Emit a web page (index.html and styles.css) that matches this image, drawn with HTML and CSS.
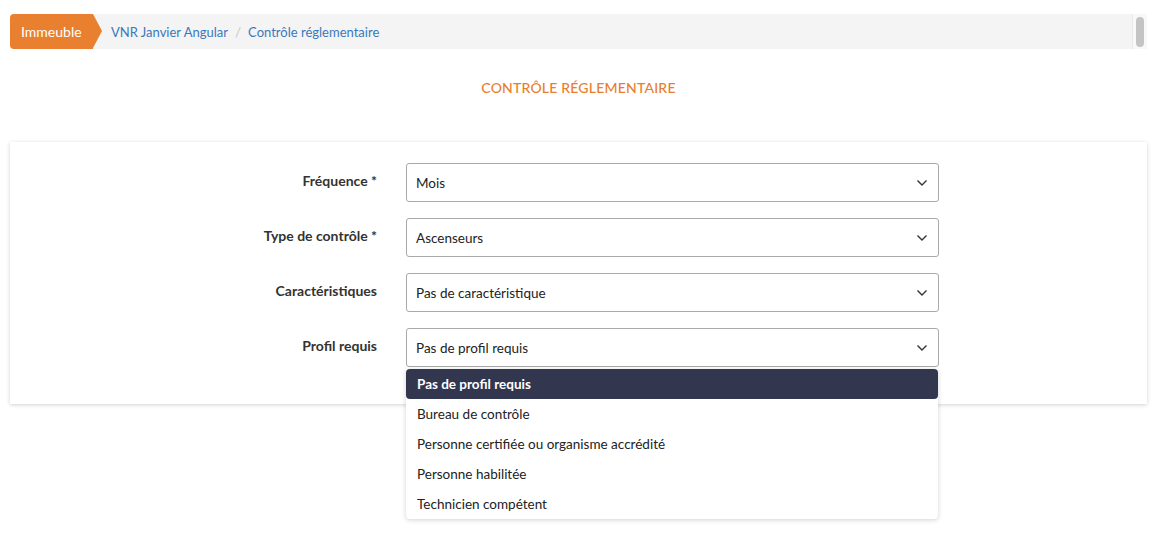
FILE: index.html
```html
<!DOCTYPE html>
<html lang="fr">
<head>
    <meta charset="utf-8">
    <title>Contrôle réglementaire</title>
    <link rel="stylesheet" href="styles.css">
</head>
<body>
    <div class="breadcrumb">
        <span class="crumb-tag">Immeuble</span>
        <a class="crumb-link" href="#">VNR Janvier Angular</a>
        <span class="crumb-sep">/</span>
        <a class="crumb-link" href="#">Contrôle réglementaire</a>
        <div class="crumb-scroll"><div class="crumb-thumb"></div></div>
    </div>

    <h1 class="page-title">CONTRÔLE RÉGLEMENTAIRE</h1>

    <div class="card">
        <div class="form-row">
            <label class="form-label">Fréquence *</label>
            <div class="select">
                <span>Mois</span>
                <svg class="chevron" width="12" height="8" viewBox="0 0 12 8"><path d="M1.5 1.5l4.5 4.5 4.5-4.5" fill="none" stroke="#333" stroke-width="1.4"/></svg>
            </div>
        </div>
        <div class="form-row">
            <label class="form-label">Type de contrôle *</label>
            <div class="select">
                <span>Ascenseurs</span>
                <svg class="chevron" width="12" height="8" viewBox="0 0 12 8"><path d="M1.5 1.5l4.5 4.5 4.5-4.5" fill="none" stroke="#333" stroke-width="1.4"/></svg>
            </div>
        </div>
        <div class="form-row">
            <label class="form-label">Caractéristiques</label>
            <div class="select">
                <span>Pas de caractéristique</span>
                <svg class="chevron" width="12" height="8" viewBox="0 0 12 8"><path d="M1.5 1.5l4.5 4.5 4.5-4.5" fill="none" stroke="#333" stroke-width="1.4"/></svg>
            </div>
        </div>
        <div class="form-row">
            <label class="form-label">Profil requis</label>
            <div class="select-wrap">
                <div class="select">
                    <span>Pas de profil requis</span>
                    <svg class="chevron" width="12" height="8" viewBox="0 0 12 8"><path d="M1.5 1.5l4.5 4.5 4.5-4.5" fill="none" stroke="#333" stroke-width="1.4"/></svg>
                </div>
                <ul class="dropdown">
                    <li class="active">Pas de profil requis</li>
                    <li>Bureau de contrôle</li>
                    <li>Personne certifiée ou organisme accrédité</li>
                    <li>Personne habilitée</li>
                    <li>Technicien compétent</li>
                </ul>
            </div>
        </div>
    </div>
</body>
</html>
```

FILE: styles.css
```css
html {
    height: 100%;
}

body {
    font-family: 'Lato', 'Open Sans', sans-serif;
    margin: 0;
    padding: 14px 9px 0 10px;
    min-height: 100%;
    box-sizing: border-box;
    background-color: #fff;
    color: #333;
    font-size: 13.5px;
}

.breadcrumb {
    display: flex;
    align-items: center;
    height: 35px;
    background-color: #f4f4f4;
    border-radius: 4px;
}

.crumb-tag {
    position: relative;
    display: flex;
    align-items: center;
    height: 35px;
    padding: 0 12px 0 11px;
    width: 60px;
    background-color: #e8802f;
    color: #fff;
    font-size: 14px;
    border-radius: 4px 0 0 4px;
    margin-right: 18px;
}

.crumb-tag::after {
    content: "";
    position: absolute;
    right: -9px;
    top: 0;
    border-top: 17.5px solid transparent;
    border-bottom: 17.5px solid transparent;
    border-left: 9px solid #e8802f;
}

.crumb-link {
    color: #3a78bd;
    text-decoration: none;
    font-size: 13px;
}

.crumb-sep {
    color: #c8c8c8;
    margin: 0 7px;
}

.crumb-scroll {
    margin-left: auto;
    width: 14px;
    height: 35px;
    border-left: 1px solid #e8e8e8;
    background-color: #f8f8f8;
    display: flex;
    justify-content: center;
    align-items: center;
}

.crumb-thumb {
    width: 8px;
    height: 30px;
    border-radius: 4px;
    background-color: #c4c4c4;
}

.page-title {
    margin: 30px 0 0 0;
    height: 48px;
    text-align: center;
    color: #e87e2e;
    font-size: 14px;
    font-weight: 500;
    letter-spacing: 0.2px;
}

.card {
    margin-top: 15px;
    background-color: #fff;
    box-shadow: 0 1px 4px rgba(0, 0, 0, 0.18);
    padding: 21px 0 37px 0;
    display: flex;
    flex-direction: column;
    gap: 16px;
}

.form-row {
    display: grid;
    grid-template-columns: 367px 533px;
    column-gap: 29px;
}

.form-label {
    text-align: right;
    font-weight: 700;
    font-size: 14px;
    color: #333;
    padding-top: 9px;
    line-height: 17px;
}

.select-wrap {
    position: relative;
}

.select {
    display: flex;
    align-items: center;
    justify-content: space-between;
    height: 37px;
    border: 1px solid #a9a9a9;
    border-radius: 3px;
    padding: 0 10px 0 9px;
    color: #222;
}

.chevron {
    margin-top: 1px;
}

.dropdown {
    position: absolute;
    top: 41px;
    left: 0;
    width: 532px;
    margin: 0;
    padding: 0;
    list-style: none;
    background-color: #fff;
    box-shadow: 0 1px 5px rgba(0, 0, 0, 0.18);
    border-radius: 4px;
    z-index: 10;
}

.dropdown li {
    height: 30px;
    line-height: 30px;
    padding-left: 11px;
    color: #222;
}

.dropdown li.active {
    background-color: #32364f;
    color: #fff;
    font-weight: 700;
    border-radius: 4px;
}
```
